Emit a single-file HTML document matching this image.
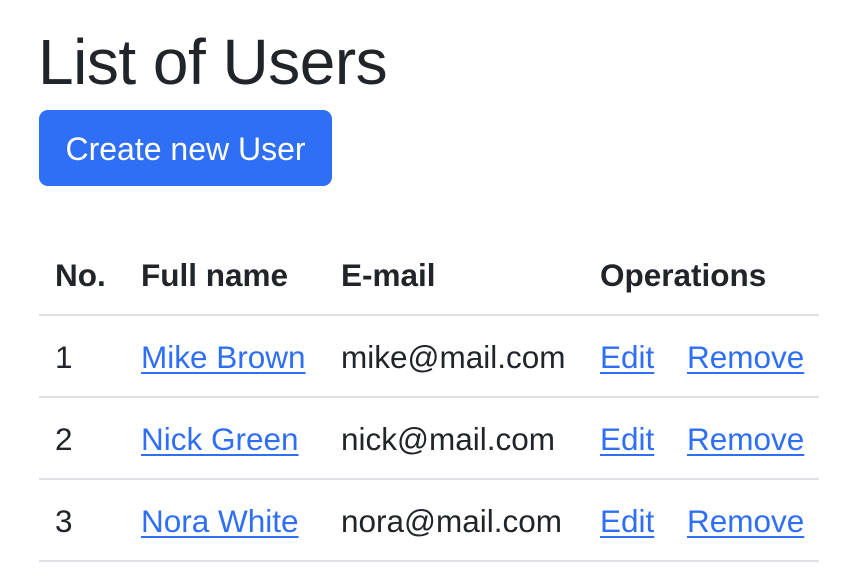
<!DOCTYPE html>
<html><head><meta charset="utf-8"><style>
body{margin:0;background:#fff;font-family:"Liberation Sans",sans-serif;color:#212529;width:864px;height:574px;overflow:hidden}
h1{position:absolute;left:38px;top:24px;margin:0;font-size:64px;font-weight:500;line-height:76px;letter-spacing:-0.5px}
.btn{position:absolute;left:39px;top:110px;width:293px;height:76px;background:#2f6ff5;color:#fff;border-radius:9px;font-size:32px;line-height:78px;text-align:center}
table{position:absolute;left:39px;top:233px;width:780px;border-collapse:collapse;font-size:31.5px;table-layout:fixed}
td,th{padding:3px 16px 0;height:77px;text-align:left;border-bottom:2px solid #dee2e6;white-space:nowrap}
th{font-weight:bold;height:78px}
a{color:#2f6ff5;text-decoration:underline;text-decoration-thickness:2px;text-underline-offset:4px}
</style></head><body>
<h1>List of Users</h1>
<div class="btn">Create new User</div>
<table>
<colgroup><col style="width:86px"><col style="width:200px"><col style="width:259px"><col style="width:87px"><col style="width:148px"></colgroup>
<tr><th>No.</th><th>Full name</th><th>E-mail</th><th colspan="2">Operations</th></tr>
<tr><td>1</td><td><a>Mike Brown</a></td><td>mike@mail.com</td><td><a>Edit</a></td><td><a>Remove</a></td></tr>
<tr><td>2</td><td><a>Nick Green</a></td><td>nick@mail.com</td><td><a>Edit</a></td><td><a>Remove</a></td></tr>
<tr><td>3</td><td><a>Nora White</a></td><td>nora@mail.com</td><td><a>Edit</a></td><td><a>Remove</a></td></tr>
</table>
</body></html>
